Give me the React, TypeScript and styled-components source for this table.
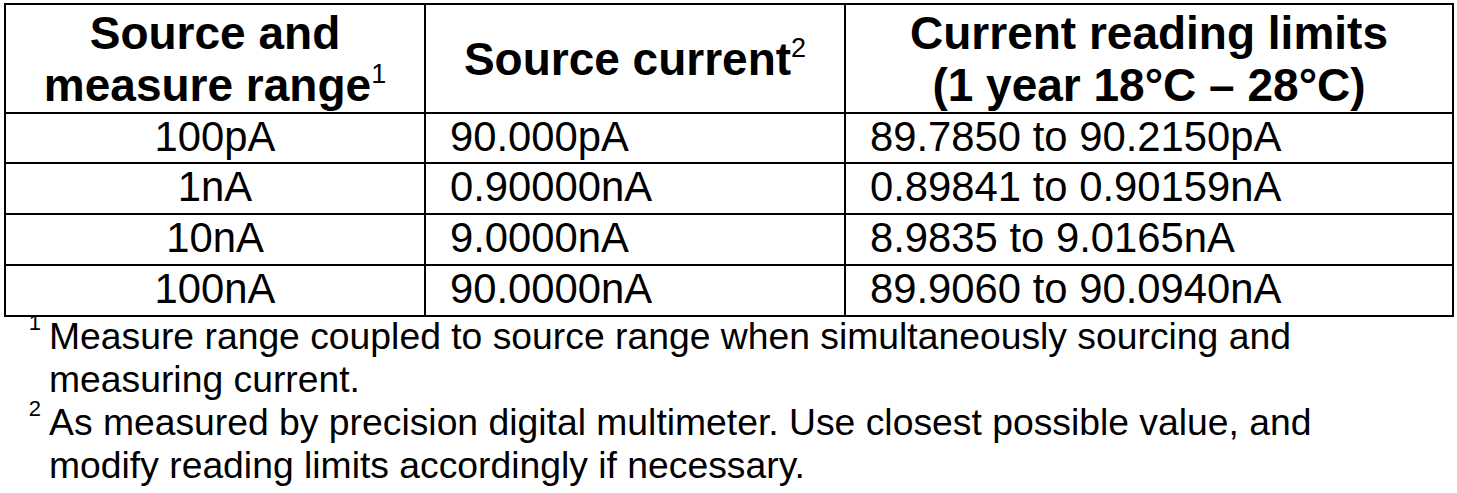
import styled, { createGlobalStyle } from "styled-components";

const GlobalStyle = createGlobalStyle`
  html, body {
    margin: 0;
    padding: 0;
    background: #fff;
  }
  body {
    font-family: "Liberation Sans", Arial, sans-serif;
    color: #000;
  }
`;

const rows = [
  { range: "100pA", source: "90.000pA", limits: "89.7850 to 90.2150pA" },
  { range: "1nA", source: "0.90000nA", limits: "0.89841 to 0.90159nA" },
  { range: "10nA", source: "9.0000nA", limits: "8.9835 to 9.0165nA" },
  { range: "100nA", source: "90.0000nA", limits: "89.9060 to 90.0940nA" },
];

export default function App() {
  return (
    <Page>
      <GlobalStyle />
      <Table>
        <HeadCell>
          <span>
            Source and
            <br />
            measure range<Sup>1</Sup>
          </span>
        </HeadCell>
        <HeadCell>
          <span>
            Source current<Sup>2</Sup>
          </span>
        </HeadCell>
        <HeadCell>
          <span>
            Current reading limits
            <br />
            (1 year 18°C – 28°C)
          </span>
        </HeadCell>
        {rows.map((r) => (
          <Row key={r.range}>
            <Cell $center>{r.range}</Cell>
            <Cell>{r.source}</Cell>
            <Cell>{r.limits}</Cell>
          </Row>
        ))}
      </Table>
      <Notes>
        <Note>
          <Mark>1</Mark>
          <NoteText>
            Measure range coupled to source range when simultaneously sourcing
            and measuring current.
          </NoteText>
        </Note>
        <Note>
          <Mark>2</Mark>
          <NoteText>
            As measured by precision digital multimeter. Use closest possible
            value, and modify reading limits accordingly if necessary.
          </NoteText>
        </Note>
      </Notes>
    </Page>
  );
}

const Page = styled.div`
  padding: 3px 0 0 4px;
  width: 1450px;
`;

const Table = styled.div`
  display: grid;
  grid-template-columns: 418px 418px 606px;
  grid-template-rows: 107px 48px 49px 49px 49px;
  gap: 2px;
  padding: 2px;
  background: #000;
  width: fit-content;
`;

const Row = styled.div`
  display: contents;
`;

const HeadCell = styled.div`
  background: #fff;
  display: flex;
  align-items: center;
  justify-content: center;
  text-align: center;
  font-weight: 700;
  font-size: 46px;
  line-height: 52px;
`;

const Sup = styled.span`
  font-size: 27px;
  font-weight: 400;
  vertical-align: 18px;
  line-height: 0;
`;

const Cell = styled.div<{ $center?: boolean }>`
  background: #fff;
  display: flex;
  align-items: center;
  justify-content: ${(p) => (p.$center ? "center" : "flex-start")};
  padding: 0 0 3px ${(p) => (p.$center ? "0" : "24px")};
  font-size: 41.8px;
  white-space: nowrap;
`;

const Notes = styled.div`
  margin-top: -2px;
  width: 1400px;
  font-size: 37.3px;
  line-height: 43px;
`;

const Note = styled.div`
  display: grid;
  grid-template-columns: 45px 1fr;
`;

const Mark = styled.span`
  font-size: 22px;
  line-height: 20px;
  text-align: right;
  padding-right: 8px;
  margin-top: -2px;
`;

const NoteText = styled.div``;
